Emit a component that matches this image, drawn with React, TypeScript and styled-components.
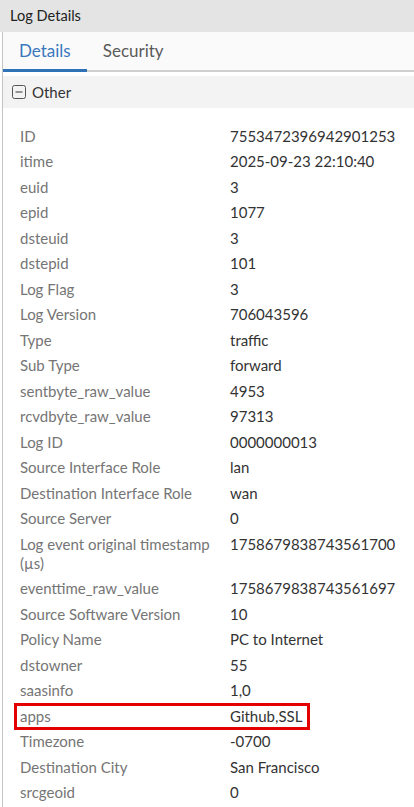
import React from "react";
import styled, { createGlobalStyle } from "styled-components";

type Field = {
  label: string;
  value: string;
  marked?: boolean;
};

const fields: Field[] = [
  { label: "ID", value: "7553472396942901253" },
  { label: "itime", value: "2025-09-23 22:10:40" },
  { label: "euid", value: "3" },
  { label: "epid", value: "1077" },
  { label: "dsteuid", value: "3" },
  { label: "dstepid", value: "101" },
  { label: "Log Flag", value: "3" },
  { label: "Log Version", value: "706043596" },
  { label: "Type", value: "traffic" },
  { label: "Sub Type", value: "forward" },
  { label: "sentbyte_raw_value", value: "4953" },
  { label: "rcvdbyte_raw_value", value: "97313" },
  { label: "Log ID", value: "0000000013" },
  { label: "Source Interface Role", value: "lan" },
  { label: "Destination Interface Role", value: "wan" },
  { label: "Source Server", value: "0" },
  { label: "Log event original timestamp (\u00b5s)", value: "1758679838743561700" },
  { label: "eventtime_raw_value", value: "1758679838743561697" },
  { label: "Source Software Version", value: "10" },
  { label: "Policy Name", value: "PC to Internet" },
  { label: "dstowner", value: "55" },
  { label: "saasinfo", value: "1,0" },
  { label: "apps", value: "Github,SSL", marked: true },
  { label: "Timezone", value: "-0700" },
  { label: "Destination City", value: "San Francisco" },
  { label: "srcgeoid", value: "0" },
];

const GlobalStyle = createGlobalStyle`
  html, body {
    margin: 0;
    padding: 0;
    background: #ffffff;
    font-family: Lato, "Liberation Sans", sans-serif;
    color: #333333;
  }
`;

const App: React.FC = () => {
  return (
    <>
      <GlobalStyle />
      <Panel>
        <TitleBar>Log Details</TitleBar>
        <Body>
          <TabBar>
            <Tab active>Details</Tab>
            <Tab>Security</Tab>
          </TabBar>
          <SectionHeader>
            <svg width="14" height="14" viewBox="0 0 14 14">
              <rect x="0.5" y="0.5" width="13" height="13" rx="2" fill="none" stroke="#555" />
              <line x1="3.5" y1="7" x2="10.5" y2="7" stroke="#555" strokeWidth="1.2" />
            </svg>
            <span>Other</span>
          </SectionHeader>
          <FieldList>
            {fields.map((f) => (
              <FieldRow key={f.label} marked={f.marked}>
                <Label>{f.label}</Label>
                <Value>{f.value}</Value>
              </FieldRow>
            ))}
          </FieldList>
        </Body>
      </Panel>
    </>
  );
};

const Panel = styled.div`
  width: 414px;
  min-height: 807px;
  display: flex;
  flex-direction: column;
`;

const TitleBar = styled.div`
  height: 32px;
  line-height: 32px;
  padding-left: 10px;
  background: #e4e4e4;
  font-size: 14.6px;
  color: #222222;
`;

const Body = styled.div`
  flex: 1;
  margin-left: 2px;
  border-left: 1px solid #c4c4c4;
`;

const TabBar = styled.div`
  display: flex;
  height: 40px;
  background: #fafafa;
  border-bottom: 2px solid #d0d0d0;
  box-sizing: border-box;
`;

const Tab = styled.div<{ active?: boolean }>`
  display: flex;
  align-items: center;
  padding: 0 16px;
  margin-bottom: -2px;
  font-size: 17px;
  color: ${(p) => (p.active ? "#3a78bd" : "#5a5a5a")};
  border-bottom: 3px solid ${(p) => (p.active ? "#2f72b5" : "transparent")};
`;

const SectionHeader = styled.div`
  display: flex;
  align-items: center;
  gap: 6px;
  height: 32px;
  margin-top: 4px;
  padding-left: 9px;
  background: #f3f3f3;
  font-size: 15px;
  color: #333333;

  svg {
    display: block;
  }
`;

const FieldList = styled.div`
  display: flex;
  flex-direction: column;
  padding: 15.5px 0 0 17px;
`;

const FieldRow = styled.div<{ marked?: boolean }>`
  position: relative;
  display: grid;
  grid-template-columns: 210px 1fr;
  padding: 3.25px 0;
  font-size: 15px;
  line-height: 19px;

  &::after {
    content: "";
    display: ${(p) => (p.marked ? "block" : "none")};
    position: absolute;
    left: -6px;
    top: -1px;
    width: 296px;
    bottom: -1px;
    border: 3px solid #e50000;
    box-sizing: border-box;
  }
`;

const Label = styled.div`
  padding-right: 8px;
  color: #757575;
`;

const Value = styled.div`
  color: #333333;
`;

export default App;
